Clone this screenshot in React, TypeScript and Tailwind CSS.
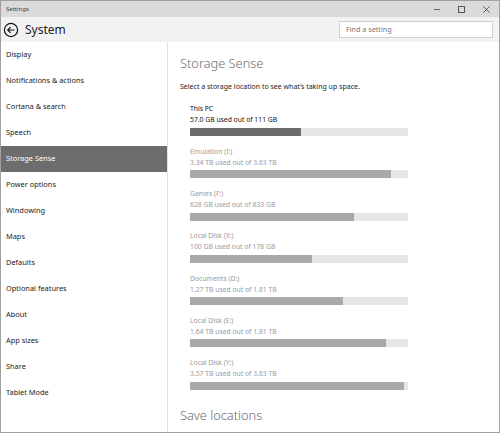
import React from "react";

const nav = [
  "Display",
  "Notifications & actions",
  "Cortana & search",
  "Speech",
  "Storage Sense",
  "Power options",
  "Windowing",
  "Maps",
  "Defaults",
  "Optional features",
  "About",
  "App sizes",
  "Share",
  "Tablet Mode",
];

const drives = [
  { name: "This PC", used: "57.0 GB used out of 111 GB", pct: 51, active: true },
  { name: "Emulation (I:)", used: "3.34 TB used out of 3.63 TB", pct: 92 },
  { name: "Games (F:)", used: "628 GB used out of 833 GB", pct: 75.3 },
  { name: "Local Disk (X:)", used: "100 GB used out of 178 GB", pct: 56 },
  { name: "Documents (D:)", used: "1.27 TB used out of 1.81 TB", pct: 70.2 },
  { name: "Local Disk (E:)", used: "1.64 TB used out of 1.81 TB", pct: 90 },
  { name: "Local Disk (Y:)", used: "3.57 TB used out of 3.63 TB", pct: 98.2 },
];

export default function App() {
  return (
    <div
      className="w-[500px] h-[433px] overflow-hidden bg-white border border-[#a0a0a0] flex flex-col"
      style={{ fontFamily: '"Noto Sans", "Open Sans", sans-serif' }}
    >
      {/* title bar */}
      <div className="h-[16px] bg-[#dadada] flex items-center shrink-0">
        <span className="pl-[5px] text-[6px] text-[#444]">Settings</span>
        <div className="ml-auto flex items-center h-full">
          <div className="w-[24px] flex justify-center">
            <div className="w-[6px] h-[1px] bg-[#666]" />
          </div>
          <div className="w-[24px] flex justify-center">
            <div className="w-[7px] h-[7px] border border-[#555]" />
          </div>
          <div className="w-[26px] flex justify-center">
            <svg width="7" height="7" viewBox="0 0 7 7">
              <path d="M0.5 0.5 L6.5 6.5 M6.5 0.5 L0.5 6.5" stroke="#555" strokeWidth="1" />
            </svg>
          </div>
        </div>
      </div>
      {/* header */}
      <div className="h-[25px] bg-[#f2f2f2] flex items-center shrink-0">
        <svg width="16" height="16" viewBox="0 0 16 16" className="ml-[2px]">
          <circle cx="8" cy="8" r="6.6" fill="none" stroke="#111" strokeWidth="1.2" />
          <path d="M11.5 8 H4.8 M7.6 5.1 L4.7 8 L7.6 10.9" fill="none" stroke="#111" strokeWidth="1.2" />
        </svg>
        <span className="ml-[6px] text-[12px] text-[#222] leading-none">System</span>
        <div className="ml-auto mr-[6px] w-[154px] h-[17px] bg-white border border-[#cfcfcf] flex items-center">
          <span className="pl-[6px] text-[7.2px] text-[#777]">Find a setting</span>
        </div>
      </div>
      {/* body */}
      <div className="flex flex-1 min-h-0">
        <div className="w-[167px] shrink-0 border-r border-[#e0e0e0] flex flex-col">
          {nav.map((n) => (
            <div
              key={n}
              className={
                n === "Storage Sense"
                  ? "h-[26px] flex items-center pl-[5px] bg-[#6d6d6d] text-white text-[7.4px]"
                  : "h-[26px] flex items-center pl-[5px] text-[#222] text-[7.4px]"
              }
            >
              {n}
            </div>
          ))}
        </div>
        <div className="flex-1 pl-[12px] pt-[12px] flex flex-col">
          <div className="h-[20px] flex items-center text-[12.8px] font-light text-[#6e6e6e]">Storage Sense</div>
          <div className="mt-[8px] h-[10px] flex items-center text-[7px] text-[#222]">
            Select a storage location to see what’s taking up space.
          </div>
          <div className="mt-[12px] pl-[10px] flex flex-col">
            {drives.map((d) => (
              <div key={d.name} className="flex flex-col mb-[10.3px]">
                <div
                  className={
                    d.active
                      ? "h-[11px] flex items-center text-[6.8px] text-[#111]"
                      : "h-[11px] flex items-center text-[6.8px] text-[#9a9a9a]"
                  }
                >
                  {d.name}
                </div>
                <div
                  className={
                    d.active
                      ? "h-[11px] flex items-center text-[6.8px] text-[#111]"
                      : "h-[11px] flex items-center text-[6.8px] text-[#9a9a9a]"
                  }
                >
                  {d.used}
                </div>
                <div className="mt-[2px] w-[218px] h-[8px] bg-[#e6e6e6]">
                  <div
                    className={d.active ? "h-full bg-[#6b6b6b]" : "h-full bg-[#a9a9a9]"}
                    style={{ width: `${d.pct}%` }}
                  />
                </div>
              </div>
            ))}
          </div>
          <div className="mt-[6px] h-[20px] flex items-center text-[12.8px] font-light text-[#6e6e6e]">Save locations</div>
        </div>
      </div>
    </div>
  );
}
